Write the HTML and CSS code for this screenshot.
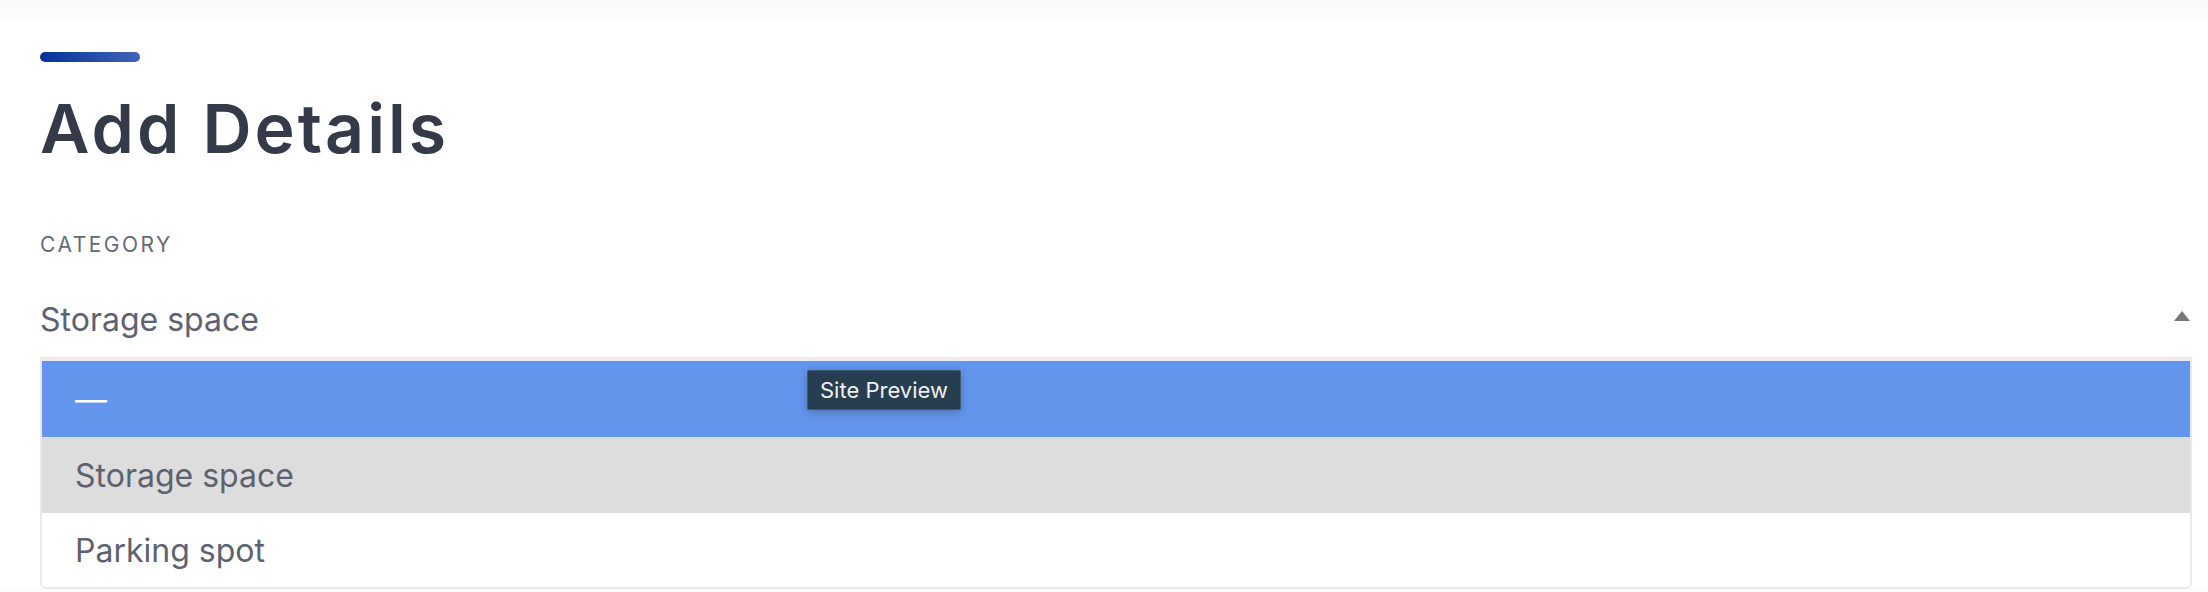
FILE: index.html
```html
<!DOCTYPE html>
<html>
<head>
	<title>Add Details</title>
	<link rel="stylesheet" href="styles.css">
</head>
<body>
	<div class="page">
		<div class="accent"></div>
		<h1 class="title">Add Details</h1>

		<div class="field">
			<label class="field-label">Category</label>
			<div class="select">
				<span class="select-value">Storage space</span>
				<span class="select-arrow"></span>
			</div>
			<ul class="options">
				<li class="option active">—</li>
				<li class="option selected">Storage space</li>
				<li class="option">Parking spot</li>
				<span class="tooltip">Site Preview</span>
			</ul>
		</div>
	</div>
</body>
</html>
```

FILE: styles.css
```css
html, body {
	margin: 0;
	padding: 0;
}
body {
	background: linear-gradient(#fafafa, #fcfcfc 20px, #fff 21px);
	font-family: Inter, "Liberation Sans", sans-serif;
	color: #5e6270;
}
.page {
	padding: 52px 16px 0 40px;
}
.accent {
	width: 100px;
	height: 10px;
	border-radius: 5px;
	background: linear-gradient(90deg, #08309a, #4262b9);
}
.title {
	margin: 26px 0 0;
	font-size: 68px;
	line-height: 80px;
	font-weight: 600;
	letter-spacing: 3px;
	color: #343a47;
}
.field {
	margin-top: 62px;
}
.field-label {
	display: block;
	font-size: 21px;
	line-height: 30px;
	letter-spacing: 2.5px;
	text-transform: uppercase;
	color: #666a76;
}
.select {
	display: flex;
	align-items: center;
	justify-content: space-between;
	margin-top: 38px;
	padding-bottom: 15px;
	font-size: 32px;
	line-height: 44px;
}
.select-arrow {
	width: 0;
	height: 0;
	margin: -8px 2px 0 0;
	border-left: 8px solid transparent;
	border-right: 8px solid transparent;
	border-bottom: 10px solid #777;
}
.options {
	position: relative;
	list-style: none;
	margin: 0;
	padding: 0;
	border: 2px solid #e9e9ef;
	border-top: 4px solid #ececec;
	border-radius: 0 0 6px 6px;
}
.option {
	padding: 1px 33px 0;
	font-size: 32px;
	line-height: 75px;
	height: 75px;
}
.option.active {
	background: #6495ed;
	color: #fff;
}
.option.selected {
	background: #dddddd;
}
.option:last-of-type {
	height: 73px;
	line-height: 73px;
}
.tooltip {
	position: absolute;
	top: 9px;
	left: 765px;
	padding: 0 12px;
	height: 38px;
	line-height: 38px;
	font-size: 22px;
	color: #f0f0f0;
	background: #273e50;
	border: 1px solid #41596f;
	border-radius: 2px;
	box-shadow: 0 2px 8px rgba(0,0,0,.25);
}
```
